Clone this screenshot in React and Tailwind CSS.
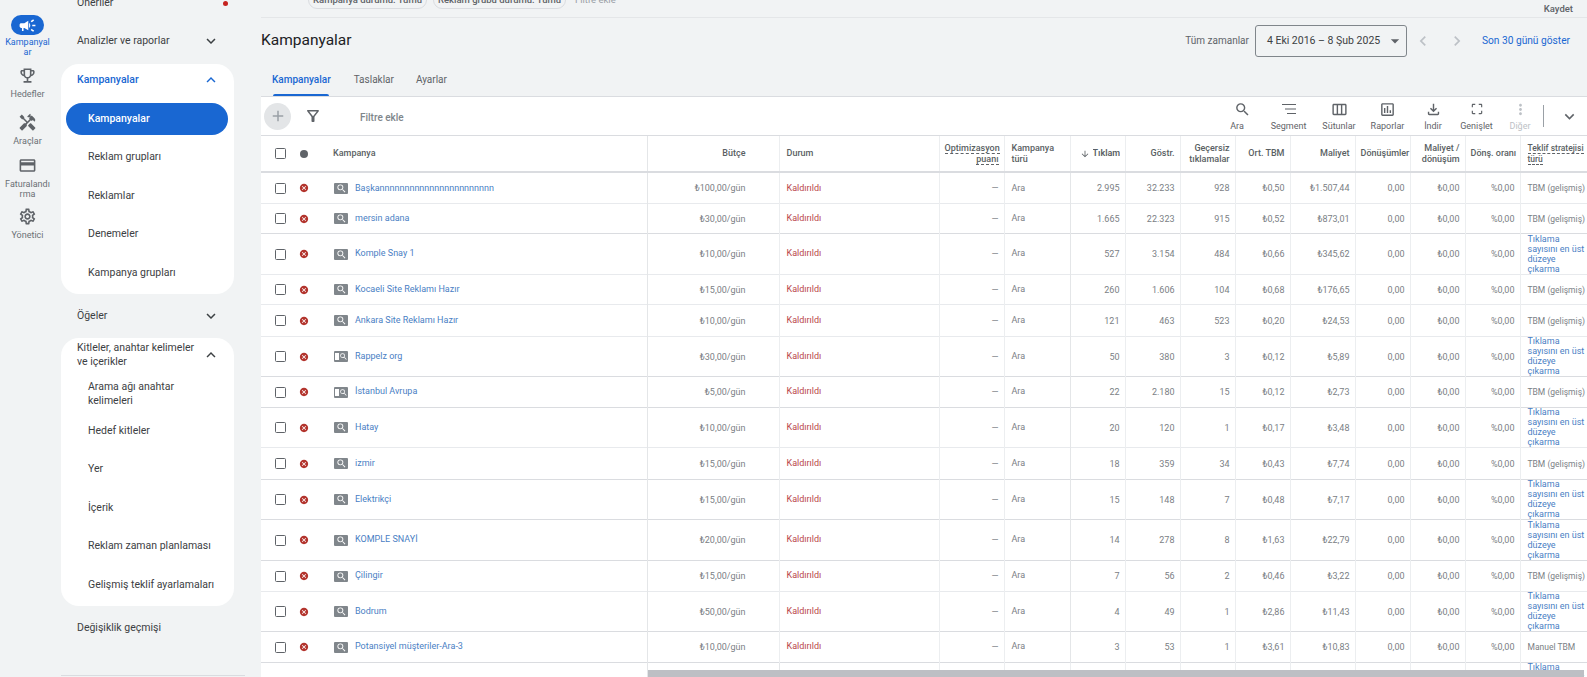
import React from "react";
import {
  MdCampaign,
  MdOutlineEmojiEvents,
  MdHandyman,
  MdOutlineCreditCard,
  MdOutlineSettings,
  MdExpandMore,
  MdExpandLess,
  MdAdd,
  MdOutlineFilterAlt,
  MdSearch,
  MdOutlineViewWeek,
  MdOutlineAssessment,
  MdOutlineFileDownload,
  MdCropFree,
  MdMoreVert,
  MdCancel,
  MdArrowDownward,
  MdChevronLeft,
  MdChevronRight,
  MdArrowDropDown,
} from "react-icons/md";

const AUTO = ["Tıklama", "sayısını en üst", "düzeye", "çıkarma"];
const TBM = "TBM (gelişmiş)";

const ROWS = [
  { h: "h-[31px]", name: "Başkannnnnnnnnnnnnnnnnnnnnnn", budget: "₺100,00/gün", clicks: "2.995", imp: "32.233", inv: "928", cpc: "₺0,50", cost: "₺1.507,44", bid: TBM },
  { h: "h-[30px]", name: "mersin adana", budget: "₺30,00/gün", clicks: "1.665", imp: "22.323", inv: "915", cpc: "₺0,52", cost: "₺873,01", bid: TBM, strong: true },
  { h: "h-[41px]", name: "Komple Snay 1", budget: "₺10,00/gün", clicks: "527", imp: "3.154", inv: "484", cpc: "₺0,66", cost: "₺345,62", bid: AUTO },
  { h: "h-[30px]", name: "Kocaeli Site Reklamı Hazır", budget: "₺15,00/gün", clicks: "260", imp: "1.606", inv: "104", cpc: "₺0,68", cost: "₺176,65", bid: TBM },
  { h: "h-[32px]", name: "Ankara Site Reklamı Hazır", budget: "₺10,00/gün", clicks: "121", imp: "463", inv: "523", cpc: "₺0,20", cost: "₺24,53", bid: TBM },
  { h: "h-[40px]", name: "Rappelz org", budget: "₺30,00/gün", clicks: "50", imp: "380", inv: "3", cpc: "₺0,12", cost: "₺5,89", bid: AUTO, book: true, strong: true },
  { h: "h-[31px]", name: "İstanbul Avrupa", budget: "₺5,00/gün", clicks: "22", imp: "2.180", inv: "15", cpc: "₺0,12", cost: "₺2,73", bid: TBM, book: true, strong: true },
  { h: "h-[40px]", name: "Hatay", budget: "₺10,00/gün", clicks: "20", imp: "120", inv: "1", cpc: "₺0,17", cost: "₺3,48", bid: AUTO },
  { h: "h-[32px]", name: "izmir", budget: "₺15,00/gün", clicks: "18", imp: "359", inv: "34", cpc: "₺0,43", cost: "₺7,74", bid: TBM, strong: true },
  { h: "h-[40px]", name: "Elektrikçi", budget: "₺15,00/gün", clicks: "15", imp: "148", inv: "7", cpc: "₺0,48", cost: "₺7,17", bid: AUTO, strong: true },
  { h: "h-[41px]", name: "KOMPLE SNAYİ", budget: "₺20,00/gün", clicks: "14", imp: "278", inv: "8", cpc: "₺1,63", cost: "₺22,79", bid: AUTO, strong: true },
  { h: "h-[31px]", name: "Çilingir", budget: "₺15,00/gün", clicks: "7", imp: "56", inv: "2", cpc: "₺0,46", cost: "₺3,22", bid: TBM },
  { h: "h-[40px]", name: "Bodrum", budget: "₺50,00/gün", clicks: "4", imp: "49", inv: "1", cpc: "₺2,86", cost: "₺11,43", bid: AUTO, strong: true },
  { h: "h-[31px]", name: "Potansiyel müşteriler-Ara-3", budget: "₺10,00/gün", clicks: "3", imp: "53", inv: "1", cpc: "₺3,61", cost: "₺10,83", bid: "Manuel TBM", strong: true },
];

const COLS = [
  "w-[386px]", "w-[132px]", "w-[160px]", "w-[65px]", "w-[66px]", "w-[55px]", "w-[55px]",
  "w-[55px]", "w-[55px]", "w-[65px]", "w-[55px]", "w-[55px]", "w-[55px]", "w-[67px]",
];

const RailItem = ({ icon: Icon, label, active, h }) => (
  <div className={`flex flex-col items-center ${h}`}>
    <div className={`flex h-[20px] w-[33px] items-center justify-center rounded-full ${active ? "bg-[#1967d2] text-white" : "text-[#5f6368]"}`}>
      <Icon className="text-[19px]" />
    </div>
    <div className={`w-[46px] break-all text-center text-[9px] leading-[10px] ${active ? "mt-[2px] text-[#1967d2]" : "mt-[4px] text-[#6b7074]"}`}>
      {label}
    </div>
  </div>
);

const NavHead = ({ label, open, blue, h = "h-[38.5px]", extra = "" }) => (
  <div className={`flex items-center justify-between pl-[16px] pr-[14px] ${h} ${extra}`}>
    <span className={`text-[10.5px] leading-[14px] ${blue ? "font-medium text-[#1967d2]" : "text-[#3c4043]"}`}>{label}</span>
    {open === undefined ? null : open ? (
      <MdExpandLess className={`shrink-0 text-[18px] ${blue ? "text-[#1967d2]" : "text-[#3c4043]"}`} />
    ) : (
      <MdExpandMore className="shrink-0 text-[18px] text-[#3c4043]" />
    )}
  </div>
);

const NavItem = ({ label, selected }) => (
  <div className="flex h-[38.5px] items-center px-[5px]">
    {selected ? (
      <div className="flex h-[32px] w-[162px] items-center rounded-full bg-[#1967d2] pl-[22px] text-[10.5px] font-medium text-white">{label}</div>
    ) : (
      <div className="pl-[22px] text-[10.5px] text-[#3c4043]">{label}</div>
    )}
  </div>
);

const Sidebar = () => (
  <div className="flex w-[261px] shrink-0">
    <div className="flex w-[55px] shrink-0 flex-col pt-[15px]">
      <RailItem icon={MdCampaign} label="Kampanyalar" active h="h-[50px]" />
      <RailItem icon={MdOutlineEmojiEvents} label="Hedefler" h="h-[47px]" />
      <RailItem icon={MdHandyman} label="Araçlar" h="h-[43px]" />
      <RailItem icon={MdOutlineCreditCard} label="Faturalandırma" h="h-[51px]" />
      <RailItem icon={MdOutlineSettings} label="Yönetici" h="h-[40px]" />
    </div>
    <div className="-mt-[16px] flex w-[190px] flex-col pl-[6px]">
      <div className="flex h-[38px] items-center justify-between pl-[16px] pr-[14px]">
        <span className="text-[10.5px] text-[#3c4043]">Öneriler</span>
        <span className="mr-[3px] size-[5px] rounded-full bg-[#c5221f]" />
      </div>
      <div className="mb-[3px] w-[173px]">
        <NavHead label="Analizler ve raporlar" open={false} />
      </div>
      <div className="w-[173px] rounded-[18px] bg-white pb-[2px]">
        <NavHead label="Kampanyalar" open blue h="h-[36px]" extra="pb-[4px]" />
        <NavItem label="Kampanyalar" selected />
        <NavItem label="Reklam grupları" />
        <NavItem label="Reklamlar" />
        <NavItem label="Denemeler" />
        <NavItem label="Kampanya grupları" />
      </div>
      <div className="w-[173px]">
        <NavHead label="Öğeler" open={false} h="h-[44px]" />
      </div>
      <div className="w-[173px] rounded-[18px] bg-white pb-[2px]">
        <NavHead label={<>Kitleler, anahtar kelimeler<br />ve içerikler</>} open h="h-[30px]" extra="pt-[4px]" />
        <div className="flex h-[43.5px] items-center pl-[27px] pt-[8px] text-[10.5px] leading-[14px] text-[#3c4043]">
          <span>Arama ağı anahtar<br />kelimeleri</span>
        </div>
        <NavItem label="Hedef kitleler" />
        <NavItem label="Yer" />
        <NavItem label="İçerik" />
        <NavItem label="Reklam zaman planlaması" />
        <NavItem label="Gelişmiş teklif ayarlamaları" />
      </div>
      <div className="w-[173px]">
        <NavHead label="Değişiklik geçmişi" h="h-[44px]" />
      </div>
      <div className="mt-[25px] h-px w-[184px] bg-[#dadce0]" />
    </div>
  </div>
);

const Chip = ({ label, w }) => (
  <div className={`flex h-[18px] items-center justify-center rounded-full border border-[#dadce0] text-[9.5px] font-medium text-[#5f6368] ${w}`}>
    {label}
  </div>
);

const TopBar = () => (
  <div className="flex h-[17.5px] items-start justify-between overflow-hidden border-b border-[#e4e6e8] pl-[47px] pr-[14px]">
    <div className="-mt-[9px] flex items-center gap-[6px]">
      <Chip label="Kampanya durumu: Tümü" w="w-[119px]" />
      <Chip label="Reklam grubu durumu: Tümü" w="w-[133px]" />
      <span className="ml-[3px] text-[9.5px] text-[#9aa0a6]">Filtre ekle</span>
    </div>
    <span className="mt-[3px] text-[9.5px] leading-[12px] font-medium text-[#5f6368]">Kaydet</span>
  </div>
);

const TitleBar = () => (
  <div className="flex h-[46px] items-center justify-between pr-[17px]">
    <span className="text-[15.5px] text-[#202124]">Kampanyalar</span>
    <div className="flex items-center">
      <span className="mr-[6px] text-[10px] text-[#5f6368]">Tüm zamanlar</span>
      <div className="flex h-[32px] w-[152px] items-center justify-between rounded-[3px] border border-[#80868b] pl-[11px] pr-[1px] text-[10.5px] text-[#3c4043]">
        4 Eki 2016 – 8 Şub 2025
        <MdArrowDropDown className="text-[20px] text-[#5f6368]" />
      </div>
      <MdChevronLeft className="ml-[6px] text-[20px] text-[#bdc1c6]" />
      <MdChevronRight className="ml-[14px] text-[20px] text-[#bdc1c6]" />
      <span className="ml-[15px] text-[10.2px] text-[#1967d2]">Son 30 günü göster</span>
    </div>
  </div>
);

const Tabs = () => (
  <div className="flex h-[32.5px] items-start pl-[11px] text-[10px]">
    <div className="flex h-full flex-col items-center">
      <span className="mt-[8px] font-medium text-[#1967d2]">Kampanyalar</span>
      <div className="mt-auto h-[2px] w-[56px] rounded-t bg-[#1967d2]" />
    </div>
    <span className="ml-[23px] mt-[8px] text-[#5f6368]">Taslaklar</span>
    <span className="ml-[22px] mt-[8px] text-[#5f6368]">Ayarlar</span>
  </div>
);

const Tool = ({ icon: Icon, label, w, disabled, iconClass = "text-[17px]" }) => (
  <div className={`flex flex-col items-center ${w} ${disabled ? "text-[#bdc1c6]" : "text-[#5f6368]"}`}>
    <span className="flex h-[17px] items-center">
      <Icon className={iconClass} />
    </span>
    <span className="mt-[3px] text-[9px] leading-[11px]">{label}</span>
  </div>
);

const SegmentIcon = ({ className }) => (
  <svg viewBox="0 0 16 16" width="16" height="16" className={className} stroke="currentColor" strokeWidth="1.2" fill="none">
    <path d="M1 3.5h14M4 8h11M6 12.5h9" />
  </svg>
);

const Toolbar = () => (
  <div className="flex h-[40px] items-center border-y border-[#dadce0] bg-white pl-[3px]">
    <div className="flex size-[27px] items-center justify-center rounded-full bg-[#e3e5e7] text-[#9aa0a6]">
      <MdAdd className="text-[18px]" />
    </div>
    <MdOutlineFilterAlt className="ml-[13px] text-[18px] text-[#5f6368]" />
    <span className="ml-[38px] mt-[2px] text-[10px] font-medium text-[#80868b]">Filtre ekle</span>
    <div className="ml-auto flex items-center">
      <Tool icon={MdSearch} label="Ara" w="w-[52px]" iconClass="translate-x-[5px] text-[17px]" />
      <Tool icon={SegmentIcon} label="Segment" w="w-[51px]" />
      <Tool icon={MdOutlineViewWeek} label="Sütunlar" w="w-[50px]" />
      <Tool icon={MdOutlineAssessment} label="Raporlar" w="w-[47px]" />
      <Tool icon={MdOutlineFileDownload} label="İndir" w="w-[44px]" />
      <Tool icon={MdCropFree} label="Genişlet" w="w-[43px]" iconClass="text-[14px]" />
      <Tool icon={MdMoreVert} label="Diğer" w="w-[44px]" disabled />
      <div className="ml-[1px] h-[22px] w-px bg-[#9aa0a6]" />
      <MdExpandMore className="ml-[16px] mr-[8px] text-[19px] text-[#5f6368]" />
    </div>
  </div>
);

const th = "border-r border-[#eceef0] px-[5px] text-[9px] leading-[11px] font-medium text-[#5a5f63]";
const td = "border-r border-[#eceef0] px-[5px] pt-[1px] text-[9px] leading-[10px] text-[#7b8085] text-right";
const dotted = "border-b border-dashed border-[#5f6368]";

const BidCell = ({ bid }) =>
  Array.isArray(bid) ? (
    <td className="overflow-hidden pl-[7px] pr-0 text-[9px] leading-[10px]">
      {/* four lines fill the whole row, the negative margin keeps them from stretching it */}
      <div className="-my-[2px] text-[#4a80c4]">
        {bid.map((line) => (
          <div key={line} className="whitespace-nowrap">{line}</div>
        ))}
      </div>
    </td>
  ) : (
    <td className="overflow-hidden pl-[7px] pr-0 pt-[1px] text-[8.5px] leading-[10px]">
      <span className="whitespace-nowrap text-[#7b8085]">{bid}</span>
    </td>
  );

const CampaignIcon = ({ book }) => (
  <span className="flex h-[11px] w-[14px] items-center justify-center rounded-[1px] bg-[#80868b]">
    {book && <span className="ml-[1px] h-[7px] w-[4px] shrink-0 bg-white" />}
    <MdSearch className={`shrink-0 text-white ${book ? "text-[9px]" : "text-[11px]"}`} />
  </span>
);

const Row = ({ row }) => (
  <tr className={`${row.h} border-b ${row.strong ? "border-[#dadce0]" : "border-[#e8eaed]"}`}>
    <td className="border-r border-[#e4e6e8] p-0 pt-[1px]">
      <div className="flex items-center">
        <span className="ml-[14px] size-[11px] rounded-[1.5px] border-[1.5px] border-[#5f6368]" />
        <MdCancel className="ml-[13px] text-[10px] text-[#b3352e]" />
        <span className="ml-[25px]"><CampaignIcon book={row.book} /></span>
        <span className="ml-[7px] whitespace-nowrap text-[9px] text-[#4a80c4]">{row.name}</span>
      </div>
    </td>
    <td className={`${td} pr-[33px]`}>{row.budget}</td>
    <td className="border-r border-[#eceef0] pl-[7px] pt-[1px] text-[9px] text-[#b9474a]">Kaldırıldı</td>
    <td className={td}>—</td>
    <td className="border-r border-[#e4e6e8] pl-[7px] pt-[1px] text-[9px] text-[#7b8085]">Ara</td>
    <td className={td}>{row.clicks}</td>
    <td className={td}>{row.imp}</td>
    <td className={td}>{row.inv}</td>
    <td className={td}>{row.cpc}</td>
    <td className={td}>{row.cost}</td>
    <td className={td}>0,00</td>
    <td className={td}>₺0,00</td>
    <td className={td}>%0,00</td>
    <BidCell bid={row.bid} />
  </tr>
);

const CampaignTable = () => (
  <table className="w-[1326px] table-fixed border-collapse bg-white">
    <colgroup>
      {COLS.map((c, i) => (
        <col key={i} className={c} />
      ))}
    </colgroup>
    <thead>
      <tr className="h-[36px] border-b-2 border-[#dadce0]">
        <th className="border-r border-[#e4e6e8] p-0 text-left text-[9px] font-medium text-[#5a5f63]">
          <div className="flex items-center">
            <span className="ml-[14px] size-[11px] rounded-[1.5px] border-[1.5px] border-[#5f6368]" />
            <span className="ml-[14px] size-[8px] rounded-full bg-[#5f6368]" />
            <span className="ml-[25px]">Kampanya</span>
          </div>
        </th>
        <th className={`${th} pr-[33px] text-right`}>Bütçe</th>
        <th className={`${th} pl-[7px] text-left`}>Durum</th>
        <th className={`${th} text-right`}>
          <span className={dotted}>Optimizasyon</span>
          <br />
          <span className={dotted}>puanı</span>
        </th>
        <th className={`${th} pl-[7px] text-left`}>Kampanya<br />türü</th>
        <th className={`${th} overflow-hidden text-right`}>
          <div className="flex items-center justify-end overflow-hidden whitespace-nowrap">
            <MdArrowDownward className="mr-[3px] shrink-0 text-[10px]" />
            <span className="w-[27px] overflow-hidden font-semibold">Tıklama</span>
          </div>
        </th>
        <th className={`${th} text-right`}>Göstr.</th>
        <th className={`${th} text-right`}>Geçersiz<br />tıklamalar</th>
        <th className={`${th} text-right`}>Ort. TBM</th>
        <th className={`${th} text-right`}>Maliyet</th>
        <th className={`${th} overflow-hidden text-right whitespace-nowrap`}>Dönüşümler</th>
        <th className={`${th} text-right`}>Maliyet /<br />dönüşüm</th>
        <th className={`${th} text-right whitespace-nowrap`}>Dönş. oranı</th>
        <th className="pl-[7px] pr-0 text-left text-[8.5px] leading-[11px] font-medium text-[#5a5f63]">
          <span className={`${dotted} whitespace-nowrap`}>Teklif stratejisi</span>
          <br />
          <span className={dotted}>türü</span>
        </th>
      </tr>
    </thead>
    <tbody>
      {ROWS.map((row) => (
        <Row key={row.name} row={row} />
      ))}
      <tr className="h-[40px]">
        <td className="border-r border-[#e4e6e8]" />
        <td className="border-r border-[#e4e6e8]" />
        {Array.from({ length: 11 }).map((_, i) => (
          <td key={i} className="border-r border-[#eceef0]" />
        ))}
        <BidCell bid={AUTO} />
      </tr>
    </tbody>
  </table>
);

export default function App() {
  return (
    <div className="flex h-[677px] overflow-hidden bg-[#f1f3f4] font-[Roboto,sans-serif]">
      <Sidebar />
      <div className="relative min-w-0 flex-1">
        <TopBar />
        <TitleBar />
        <Tabs />
        <Toolbar />
        <CampaignTable />
        {/* horizontal scrollbar sits on top of the table */}
        <div className="absolute bottom-0 left-[387px] h-[7px] w-[936px] bg-[#bdbfc4]" />
      </div>
    </div>
  );
}
